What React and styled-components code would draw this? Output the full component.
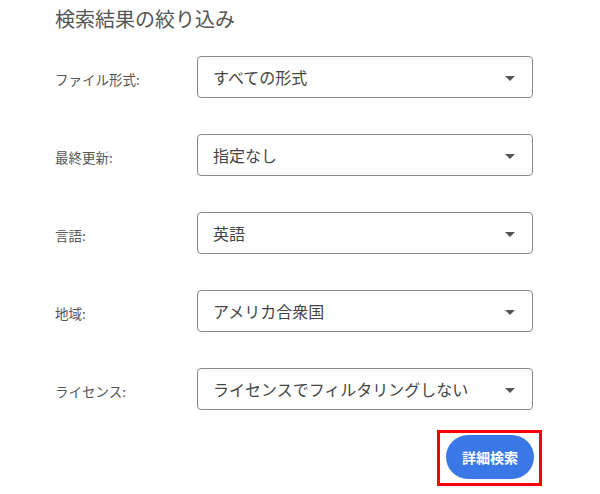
import React from 'react';
import styled, { createGlobalStyle } from 'styled-components';

const Global = createGlobalStyle`
  html, body {
    margin: 0;
    padding: 0;
    background: #fff;
  }
  body {
    font-family: "Noto Sans CJK JP", "Noto Sans", sans-serif;
  }
`;

const Page = styled.div`
  width: 600px;
  height: 494px;
  padding: 4px 0 0 55px;
  box-sizing: border-box;
  overflow: hidden;
`;

const Title = styled.h2`
  margin: 0 0 22px;
  font-size: 20px;
  line-height: 30px;
  font-weight: 400;
  color: #555;
`;

const Form = styled.div`
  width: 478px;
  display: flex;
  flex-direction: column;
  gap: 36px;
`;

const Row = styled.div`
  display: grid;
  grid-template-columns: 142px 336px;
  align-items: center;
`;

const Label = styled.label`
  font-size: 13.5px;
  line-height: 20px;
  color: #555;
  padding-top: 3px;
`;

const SelectBox = styled.div`
  height: 42px;
  box-sizing: border-box;
  border: 1px solid #8a8a8a;
  border-radius: 4px;
  display: flex;
  align-items: center;
  justify-content: space-between;
  padding: 0 17px 0 15px;
  font-size: 16px;
  color: #444;
`;

const Arrow = styled.span`
  width: 0;
  height: 0;
  border-left: 5px solid transparent;
  border-right: 5px solid transparent;
  border-top: 5px solid #555;
  margin-top: 2px;
`;

const Actions = styled.div`
  display: flex;
  justify-content: flex-end;
  margin: 20px -9px 0 0;
`;

const Highlight = styled.div`
  border: 3px solid #f00;
  padding: 2px 5px 4px 6px;
`;

const SearchButton = styled.button`
  width: 88px;
  height: 44px;
  border: none;
  border-radius: 22px;
  background: #3b78e7;
  color: #fff;
  font-family: inherit;
  font-size: 14px;
  font-weight: 700;
  cursor: pointer;
`;

const filters = [
  { label: 'ファイル形式:', value: 'すべての形式' },
  { label: '最終更新:', value: '指定なし' },
  { label: '言語:', value: '英語' },
  { label: '地域:', value: 'アメリカ合衆国' },
  { label: 'ライセンス:', value: 'ライセンスでフィルタリングしない' },
];

export default function App() {
  return (
    <Page>
      <Global />
      <Title>検索結果の絞り込み</Title>
      <Form>
        {filters.map((f) => (
          <Row key={f.label}>
            <Label>{f.label}</Label>
            <SelectBox>
              <span>{f.value}</span>
              <Arrow />
            </SelectBox>
          </Row>
        ))}
      </Form>
      <Form>
        <Actions>
          <Highlight>
            <SearchButton>詳細検索</SearchButton>
          </Highlight>
        </Actions>
      </Form>
    </Page>
  );
}
